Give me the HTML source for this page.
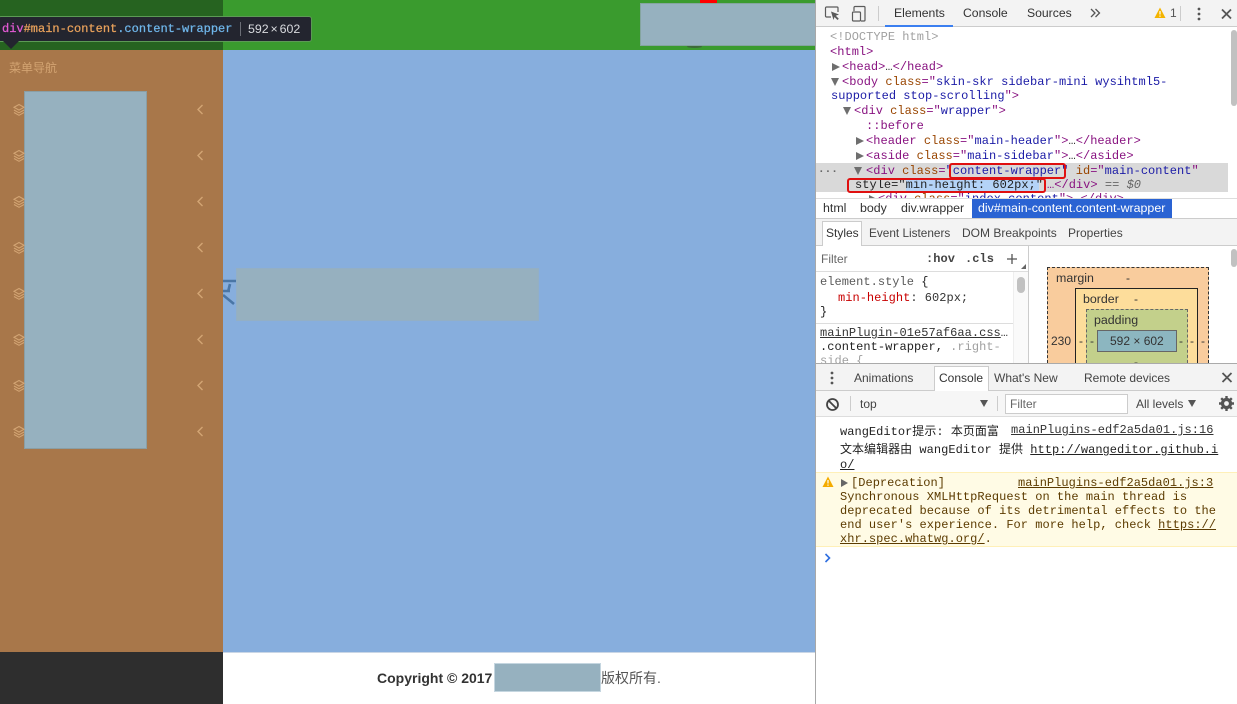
<!DOCTYPE html>
<html lang="zh">
<head>
<meta charset="utf-8">
<style>
html,body{margin:0;padding:0;width:1237px;height:704px;overflow:hidden;background:#fff}
*{box-sizing:border-box}
#w{position:absolute;left:0;top:0;width:1237px;height:704px;overflow:hidden;filter:blur(.3px)}
.a{position:absolute}
.t{position:absolute;white-space:pre;line-height:15px}
.m{font-family:"Liberation Mono","Noto Sans CJK SC",monospace;font-size:12px;color:#333;letter-spacing:.03px;margin-top:1px}
.s{font-family:"Liberation Sans","Noto Sans CJK SC",sans-serif;font-size:12px;color:#333}
.tb{font-size:12.2px}.bc{font-size:12.4px}.dn{margin-top:1px}
.tg{color:#881280}.at{color:#994500}.v{color:#1a1aa6}.g{color:#a0a0a0}.gy{color:#5a5a5a}
.tri{position:absolute;width:0;height:0}
.r{border-left:8px solid #6e6e6e;border-top:4px solid transparent;border-bottom:4px solid transparent}
.d{border-top:8px solid #6e6e6e;border-left:4.5px solid transparent;border-right:4.5px solid transparent}
.blk{position:absolute;background:#96b1bf;border:1px solid #8b9ea3}
u{text-underline-offset:1px}
</style>
</head>
<body>
<div id="w">
<!-- page -->
<div class="a" style="left:0;top:0;width:223px;height:50px;background:#266320"></div>
<div class="a" style="left:223px;top:0;width:593px;height:50px;background:#3a9b2e"></div>
<div class="a" style="left:0;top:50px;width:223px;height:602px;background:#a8774a"></div>
<div class="a" style="left:223px;top:50px;width:592px;height:602px;background:#87aedd"></div>
<div class="a" style="left:0;top:652px;width:223px;height:52px;background:#2e2e2e"></div>
<div class="a" style="left:223px;top:652px;width:592px;height:52px;background:#fff;border-top:1px solid #c9d6e6"></div>

<div class="a" style="left:700px;top:0;width:17px;height:3px;background:#f00"></div>
<div class="a" style="left:687px;top:45px;width:15px;height:3px;background:#3c6a38;border-radius:50%"></div>
<div class="blk" style="left:640px;top:3px;width:176px;height:43px;border-color:#84a59f"></div>

<div class="t s" style="left:9px;top:61px;color:#d3a472;font-size:12px">菜单导航</div>
<div class="blk" style="left:24px;top:91px;width:123px;height:358px"></div>

<svg class="a" style="left:0;top:90px" width="223" height="360" fill="none" stroke="#d3a574" stroke-width="1.1">
<g><path d="M19 14.5l5 2.8-5 2.8-5-2.8zM14 20l5 2.8 5-2.8M14 22.5l5 2.8 5-2.8"/><path d="M202.5 15l-4.5 4.5 4.5 4.5" stroke-width="1.4"/></g>
<g transform="translate(0,46)"><path d="M19 14.5l5 2.8-5 2.8-5-2.8zM14 20l5 2.8 5-2.8M14 22.5l5 2.8 5-2.8"/><path d="M202.5 15l-4.5 4.5 4.5 4.5" stroke-width="1.4"/></g>
<g transform="translate(0,92)"><path d="M19 14.5l5 2.8-5 2.8-5-2.8zM14 20l5 2.8 5-2.8M14 22.5l5 2.8 5-2.8"/><path d="M202.5 15l-4.5 4.5 4.5 4.5" stroke-width="1.4"/></g>
<g transform="translate(0,138)"><path d="M19 14.5l5 2.8-5 2.8-5-2.8zM14 20l5 2.8 5-2.8M14 22.5l5 2.8 5-2.8"/><path d="M202.5 15l-4.5 4.5 4.5 4.5" stroke-width="1.4"/></g>
<g transform="translate(0,184)"><path d="M19 14.5l5 2.8-5 2.8-5-2.8zM14 20l5 2.8 5-2.8M14 22.5l5 2.8 5-2.8"/><path d="M202.5 15l-4.5 4.5 4.5 4.5" stroke-width="1.4"/></g>
<g transform="translate(0,230)"><path d="M19 14.5l5 2.8-5 2.8-5-2.8zM14 20l5 2.8 5-2.8M14 22.5l5 2.8 5-2.8"/><path d="M202.5 15l-4.5 4.5 4.5 4.5" stroke-width="1.4"/></g>
<g transform="translate(0,276)"><path d="M19 14.5l5 2.8-5 2.8-5-2.8zM14 20l5 2.8 5-2.8M14 22.5l5 2.8 5-2.8"/><path d="M202.5 15l-4.5 4.5 4.5 4.5" stroke-width="1.4"/></g>
<g transform="translate(0,322)"><path d="M19 14.5l5 2.8-5 2.8-5-2.8zM14 20l5 2.8 5-2.8M14 22.5l5 2.8 5-2.8"/><path d="M202.5 15l-4.5 4.5 4.5 4.5" stroke-width="1.4"/></g>
</svg>

<svg class="a" style="left:223px;top:275px" width="15" height="35" fill="none" stroke="#4a76a6" stroke-width="2.6"><path d="M0 6h13M7 9l-2 8M0 16h7M0 20l11 9"/></svg>
<div class="blk" style="left:236px;top:268px;width:303px;height:53px;background:#96b0bf;border-color:#93afc5"></div>

<div class="t" style="left:377px;top:669px;font:bold 14px/18px 'Liberation Sans',sans-serif;color:#333">Copyright © 2017</div>
<div class="blk" style="left:494px;top:663px;width:107px;height:29px;border-color:#c5d6e0"></div>
<div class="t" style="left:601px;top:669px;font:14px/18px 'Liberation Sans','Noto Sans CJK SC',sans-serif;color:#555">版权所有.</div>

<!-- tooltip -->
<div class="a" style="left:-2px;top:16px;width:314px;height:26px;background:#23252f;border:1px solid #5c9a55;border-radius:3px"></div>
<div class="tri" style="left:3px;top:41px;border-top:8px solid #23252f;border-left:8px solid transparent;border-right:8px solid transparent"></div>
<div class="t" style="left:2px;top:21px;font:12px/16px 'Liberation Mono',monospace;color:#e8a15b;-webkit-text-stroke:.25px"><span style="color:#e25ad4">div</span>#main-content<span style="color:#6fb6ea">.content-wrapper</span></div>
<div class="a" style="left:240px;top:22px;width:1px;height:14px;background:#6b6e76"></div>
<div class="t" style="left:248px;top:21px;font:12.4px/16px 'Liberation Sans',sans-serif;color:#d8dade;word-spacing:-1.6px">592 × 602</div>

<!-- devtools -->
<div class="a" style="left:815px;top:0;width:422px;height:704px;background:#fff;border-left:1px solid #a8a8a8"></div>
<div class="a" style="left:816px;top:0;width:421px;height:27px;background:#f3f3f3;border-bottom:1px solid #ccc"></div>
<svg class="a" style="left:824px;top:5px" width="45" height="18" fill="none" stroke="#5a5a5a" stroke-width="1.2">
<path d="M7 12H2.5a1 1 0 0 1-1-1V3a1 1 0 0 1 1-1H13a1 1 0 0 1 1 1v4"/><path d="M7 6.5l8 3-3.2 1.2 3 3-1.3 1.3-3-3L9.5 15z" fill="#5a5a5a" stroke="none"/>
<path d="M30 6V2.5a1 1 0 0 1 1-1h9a1 1 0 0 1 1 1v12.5a1 1 0 0 1-1 1h-3"/><rect x="28.500" y="7" width="8" height="9" rx="1"/>
</svg>
<div class="a" style="left:878px;top:6px;width:1px;height:15px;background:#ccc"></div>
<div class="t s tb" style="left:894px;top:6px;color:#333">Elements</div>
<div class="a" style="left:885px;top:25px;width:68px;height:2px;background:#3b7ff0"></div>
<div class="t s tb" style="left:963px;top:6px">Console</div>
<div class="t s tb" style="left:1027px;top:6px">Sources</div>
<svg class="a" style="left:1090px;top:8px" width="11" height="10" fill="none" stroke="#555" stroke-width="1.3"><path d="M1 1l4 4-4 4M5.500 1l4 4-4 4"/></svg>
<svg class="a" style="left:1154px;top:7px" width="12" height="12"><path d="M6 .5L11.500 11H.5z" fill="#f4b400"/><path d="M6 4v3.500M6 8.500v1.200" stroke="#fff" stroke-width="1.2"/></svg>
<div class="t s" style="left:1170px;top:6px;color:#555">1</div>
<div class="a" style="left:1180px;top:6px;width:1px;height:15px;background:#ccc"></div>
<svg class="a" style="left:1196px;top:6px" width="40" height="16" fill="#555"><circle cx="3" cy="3" r="1.400"/><circle cx="3" cy="8" r="1.400"/><circle cx="3" cy="13" r="1.400"/><path d="M26 3.500l9 9M35 3.500l-9 9" stroke="#555" stroke-width="1.800"/></svg>

<!-- elements -->
<div class="a" style="left:1231px;top:30px;width:6px;height:76px;background:#c1c1c1;border-radius:3px"></div>
<div class="a" style="left:816px;top:163px;width:412px;height:29px;background:#d9d9d9"></div>
<div class="t m g" style="left:830px;top:29px">&lt;!DOCTYPE html&gt;</div>
<div class="t m" style="left:830px;top:44px"><span class="tg">&lt;html&gt;</span></div>
<div class="tri r" style="left:832px;top:63px"></div>
<div class="t m" style="left:842px;top:59px"><span class="tg">&lt;head&gt;</span>…<span class="tg">&lt;/head&gt;</span></div>
<div class="tri d" style="left:831px;top:78px"></div>
<div class="t m" style="left:842px;top:74px"><span class="tg">&lt;body</span> <span class="at">class</span><span class="tg">="</span><span class="v">skin-skr sidebar-mini wysihtml5-</span></div>
<div class="t m" style="left:831px;top:88px"><span class="v">supported stop-scrolling</span><span class="tg">"&gt;</span></div>
<div class="tri d" style="left:843px;top:107px"></div>
<div class="t m" style="left:854px;top:103px"><span class="tg">&lt;div</span> <span class="at">class</span><span class="tg">="</span><span class="v">wrapper</span><span class="tg">"&gt;</span></div>
<div class="t m" style="left:866px;top:118px;color:#881280">::before</div>
<div class="tri r" style="left:856px;top:137px"></div>
<div class="t m" style="left:866px;top:133px"><span class="tg">&lt;header</span> <span class="at">class</span><span class="tg">="</span><span class="v">main-header</span><span class="tg">"&gt;</span>…<span class="tg">&lt;/header&gt;</span></div>
<div class="tri r" style="left:856px;top:152px"></div>
<div class="t m" style="left:866px;top:148px"><span class="tg">&lt;aside</span> <span class="at">class</span><span class="tg">="</span><span class="v">main-sidebar</span><span class="tg">"&gt;</span>…<span class="tg">&lt;/aside&gt;</span></div>
<div class="t m" style="left:818px;top:162px;color:#666;font-weight:bold;font-size:11px">...</div>
<div class="tri d" style="left:854px;top:167px"></div>
<div class="t m" style="left:866px;top:163px"><span class="tg">&lt;div</span> <span class="at">class</span><span class="tg">=</span><span class="v">"content-wrapper" </span><span class="at">id</span><span class="tg">="</span><span class="v">main-content</span><span class="tg">"</span></div>
<div class="a" style="left:949px;top:163px;width:117px;height:16px;border:2px solid #e01010;border-radius:3px"></div>
<div class="a" style="left:906px;top:179px;width:133px;height:13px;background:#b4d3f7"></div>
<div class="t m" style="left:855px;top:177px;color:#222">style="min-height: 602px;"</div>
<div class="t m" style="left:1047px;top:177px"><span class="tg">…&lt;/div&gt;</span> <span style="color:#666">==</span> <i style="color:#666">$0</i></div>
<div class="a" style="left:847px;top:178px;width:199px;height:15px;border:2px solid #e01010;border-radius:3px"></div>
<div class="t m" style="left:878px;top:191px"><span class="tg">&lt;div</span> <span class="at">class</span><span class="tg">="</span><span class="v">index-content</span><span class="tg">"&gt;</span>…<span class="tg">&lt;/div&gt;</span></div>
<div class="tri r" style="left:869px;top:195px"></div>

<!-- breadcrumbs -->
<div class="a" style="left:816px;top:198px;width:421px;height:21px;background:#fff;border-top:1px solid #ddd;border-bottom:1px solid #ccc"></div>
<div class="a" style="left:972px;top:199px;width:200px;height:19px;background:#2a63d3"></div>
<div class="t s bc" style="left:823px;top:201px">html</div>
<div class="t s bc" style="left:860px;top:201px">body</div>
<div class="t s bc" style="left:901px;top:201px">div.wrapper</div>
<div class="t s bc" style="left:978px;top:201px;color:#fff">div#main-content.content-wrapper</div>

<!-- sidebar tabs -->
<div class="a" style="left:816px;top:219px;width:421px;height:27px;background:#f3f3f3;border-bottom:1px solid #ccc"></div>
<div class="a" style="left:822px;top:221px;width:40px;height:25px;background:#fff;border:1px solid #ccc;border-bottom:none"></div>
<div class="t s dn" style="left:826px;top:225px">Styles</div>
<div class="t s dn" style="left:869px;top:225px;color:#444;font-size:11.8px">Event Listeners</div>
<div class="t s dn" style="left:962px;top:225px;color:#444">DOM Breakpoints</div>
<div class="t s dn" style="left:1068px;top:225px;color:#444">Properties</div>

<!-- styles pane -->
<div class="a" style="left:1013px;top:272px;width:15px;height:91px;background:#fafafa;border-left:1px solid #eee"></div>
<div class="a" style="left:816px;top:247px;width:212px;height:24px;background:#fff"></div>
<div class="a" style="left:816px;top:271px;width:212px;height:1px;background:#ddd"></div>
<div class="t s dn" style="left:821px;top:251px;color:#666">Filter</div>
<div class="t m" style="left:926px;top:251px;font-weight:bold;color:#444">:hov</div>
<div class="t m" style="left:965px;top:251px;font-weight:bold;color:#444">.cls</div>
<svg class="a" style="left:1006px;top:253px" width="22" height="18" stroke="#555" stroke-width="1.300"><path d="M6 1v10M1 6h10" /><path d="M20 11v5h-5z" fill="#666" stroke="none"/></svg>
<div class="a" style="left:1017px;top:277px;width:8px;height:16px;background:#c1c1c1;border-radius:4px"></div>
<div class="t m gy" style="left:820px;top:274px">element.style <span style="color:#222">{</span></div>
<div class="t m" style="left:838px;top:290px"><span style="color:#c80000">min-height</span>: 602px;</div>
<div class="t m" style="left:820px;top:304px;color:#222">}</div>
<div class="a" style="left:816px;top:323px;width:197px;height:1px;background:#ddd"></div>
<div class="t m" style="left:820px;top:325px;color:#333"><u>mainPlugin-01e57af6aa.css</u>…</div>
<div class="t m" style="left:820px;top:339px;color:#222">.content-wrapper, <span class="g">.right-</span></div>
<div class="t m g" style="left:820px;top:353px">side {</div>

<!-- box model -->
<div class="a" style="left:1028px;top:246px;width:209px;height:117px;background:#fff;border-left:1px solid #ccc"></div>
<div class="a" style="left:1231px;top:249px;width:6px;height:18px;background:#c1c1c1;border-radius:3px"></div>
<div class="a" style="left:1047px;top:267px;width:162px;height:96px;background:#f9cc9d;border:1px dashed #333;border-bottom:none"></div>
<div class="a" style="left:1075px;top:288px;width:123px;height:75px;background:#fddd9b;border:1px solid #222;border-bottom:none"></div>
<div class="a" style="left:1086px;top:309px;width:102px;height:54px;background:#c3d08b;border:1px dashed #666;border-bottom:none"></div>
<div class="a" style="left:1097px;top:330px;width:80px;height:22px;background:#8cb6c0;border:1px solid #666"></div>
<div class="t s bc" style="left:1056px;top:271px;">margin</div>
<div class="t s" style="left:1126px;top:271px">-</div>
<div class="t s bc" style="left:1083px;top:292px">border</div>
<div class="t s" style="left:1134px;top:292px">-</div>
<div class="t s bc" style="left:1094px;top:313px">padding</div>
<div class="t s" style="left:1051px;top:334px">230</div>
<div class="t s" style="left:1079px;top:334px">-</div>
<div class="t s" style="left:1090px;top:334px">-</div>
<div class="t s" style="left:1110px;top:334px">592 × 602</div>
<div class="t s" style="left:1179px;top:334px">-</div>
<div class="t s" style="left:1190px;top:334px">-</div>
<div class="t s" style="left:1201px;top:334px">-</div>
<div class="t s" style="left:1134px;top:355px">-</div>

<!-- drawer -->
<div class="a" style="left:816px;top:363px;width:421px;height:341px;background:#fff;border-top:1px solid #aaa"></div>
<div class="a" style="left:816px;top:364px;width:421px;height:27px;background:#f3f3f3;border-bottom:1px solid #ccc"></div>
<div class="a" style="left:934px;top:366px;width:55px;height:25px;background:#fff;border:1px solid #ccc;border-bottom:none"></div>
<svg class="a" style="left:830px;top:371px" width="4" height="14" fill="#555"><circle cx="2" cy="2" r="1.400"/><circle cx="2" cy="7" r="1.400"/><circle cx="2" cy="12" r="1.400"/></svg>
<div class="t s dn" style="left:854px;top:370px;color:#444">Animations</div>
<div class="t s dn" style="left:939px;top:370px">Console</div>
<div class="t s dn" style="left:994px;top:370px;color:#444">What's New</div>
<div class="t s dn" style="left:1084px;top:370px;color:#444">Remote devices</div>
<svg class="a" style="left:1221px;top:371px" width="12" height="13"><path d="M1.500 2l9 9M10.500 2l-9 9" stroke="#555" stroke-width="1.800"/></svg>

<div class="a" style="left:816px;top:391px;width:421px;height:26px;background:#f6f6f6;border-bottom:1px solid #ddd"></div>
<svg class="a" style="left:825px;top:397px" width="15" height="15" fill="none" stroke="#444" stroke-width="1.800"><circle cx="7.500" cy="7.500" r="5.500"/><path d="M3.600 3.600l7.800 7.800"/></svg>
<div class="a" style="left:850px;top:396px;width:1px;height:15px;background:#ccc"></div>
<div class="t s dn" style="left:860px;top:396px;color:#444">top</div>
<div class="tri" style="left:980px;top:400px;border-top:7px solid #555;border-left:4px solid transparent;border-right:4px solid transparent"></div>
<div class="a" style="left:997px;top:396px;width:1px;height:15px;background:#ccc"></div>
<div class="a" style="left:1005px;top:394px;width:123px;height:20px;background:#fff;border:1px solid #ccc"></div>
<div class="t s dn" style="left:1010px;top:396px;color:#666">Filter</div>
<div class="t s dn" style="left:1136px;top:396px;color:#444">All levels</div>
<div class="tri" style="left:1188px;top:400px;border-top:7px solid #555;border-left:4px solid transparent;border-right:4px solid transparent"></div>
<svg class="a" style="left:1219px;top:396px" width="15" height="15"><circle cx="7.500" cy="7.500" r="4" fill="none" stroke="#555" stroke-width="3.200"/><path d="M7.500 0v3M7.500 12v3M0 7.500h3M12 7.500h3M2.200 2.200l2 2M10.800 10.800l2 2M12.800 2.200l-2 2M4.200 10.800l-2 2" stroke="#555" stroke-width="2.400"/></svg>

<div class="t m" style="left:840px;top:424px;color:#222">wangEditor提示: 本页面富</div>
<div class="t m" style="left:1011px;top:422px;color:#333"><u>mainPlugins-edf2a5da01.js:16</u></div>
<div class="t m" style="left:840px;top:442px;color:#222">文本编辑器由 wangEditor 提供 <u>http://wangeditor.github.i</u></div>
<div class="t m" style="left:840px;top:457px;color:#222"><u>o/</u></div>

<div class="a" style="left:816px;top:472px;width:421px;height:75px;background:#fffbe5;border-top:1px solid #fff0b8;border-bottom:1px solid #fff0b8"></div>
<svg class="a" style="left:822px;top:476px" width="12" height="12"><path d="M6 .5L11.500 11H.5z" fill="#f4ab00"/><path d="M6 4v3.500M6 8.500v1.200" stroke="#fff" stroke-width="1.200"/></svg>
<div class="tri" style="left:841px;top:479px;border-left:7px solid #666;border-top:4px solid transparent;border-bottom:4px solid transparent"></div>
<div class="t m" style="left:851px;top:475px;color:#5c3b00">[Deprecation]</div>
<div class="t m" style="left:1018px;top:475px;color:#5c3b00"><u>mainPlugins-edf2a5da01.js:3</u></div>
<div class="t m" style="left:840px;top:489px;color:#5c3b00">Synchronous XMLHttpRequest on the main thread is</div>
<div class="t m" style="left:840px;top:503px;color:#5c3b00">deprecated because of its detrimental effects to the</div>
<div class="t m" style="left:840px;top:517px;color:#5c3b00">end user's experience. For more help, check <u>https://</u></div>
<div class="t m" style="left:840px;top:531px;color:#5c3b00"><u>xhr.spec.whatwg.org/</u>.</div>
<svg class="a" style="left:824px;top:553px" width="8" height="10" fill="none" stroke="#2f6fe0" stroke-width="1.600"><path d="M1.500 1l4 4-4 4"/></svg>
</div>
</body>
</html>
